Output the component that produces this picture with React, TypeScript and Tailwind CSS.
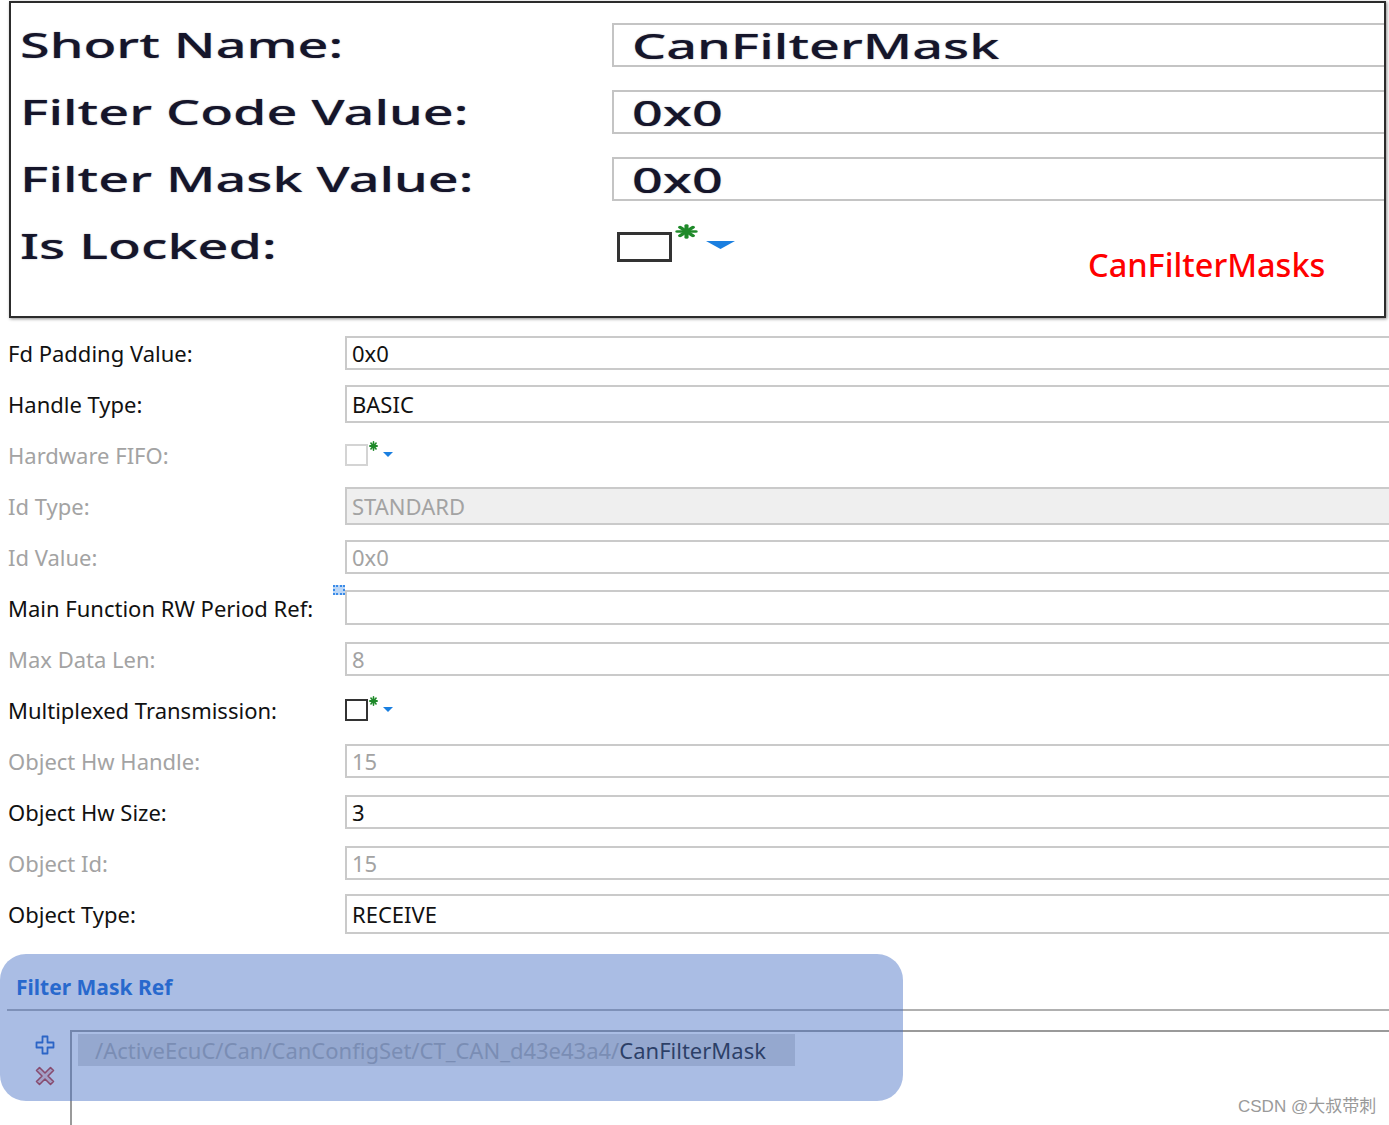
import React from "react";

const Asterisk = ({ className }: { className?: string }) => (
  <svg viewBox="0 0 10 10" className={className} preserveAspectRatio="none">
    <g stroke="#1f8a2a" strokeWidth="1.8" strokeLinecap="round">
      <line x1="5" y1="1" x2="5" y2="9" />
      <line x1="1" y1="5" x2="9" y2="5" />
      <line x1="2.2" y1="2.2" x2="7.8" y2="7.8" />
      <line x1="7.8" y1="2.2" x2="2.2" y2="7.8" />
    </g>
  </svg>
);

const Tri = ({ className }: { className?: string }) => (
  <svg viewBox="0 0 10 6" className={className} preserveAspectRatio="none">
    <polygon points="0,0 10,0 5,6" fill="#1a7fe0" />
  </svg>
);

type Row =
  | { label: string; kind: "input"; value: string; disabled?: boolean; h: number; bg?: string; icon?: boolean }
  | { label: string; kind: "check"; disabled?: boolean };

const rows: Row[] = [
  { label: "Fd Padding Value:", kind: "input", value: "0x0", h: 34 },
  { label: "Handle Type:", kind: "input", value: "BASIC", h: 38 },
  { label: "Hardware FIFO:", kind: "check", disabled: true },
  { label: "Id Type:", kind: "input", value: "STANDARD", disabled: true, h: 38, bg: "gray" },
  { label: "Id Value:", kind: "input", value: "0x0", disabled: true, h: 34 },
  { label: "Main Function RW Period Ref:", kind: "input", value: "", h: 35, icon: true },
  { label: "Max Data Len:", kind: "input", value: "8", disabled: true, h: 34 },
  { label: "Multiplexed Transmission:", kind: "check" },
  { label: "Object Hw Handle:", kind: "input", value: "15", disabled: true, h: 34 },
  { label: "Object Hw Size:", kind: "input", value: "3", h: 34 },
  { label: "Object Id:", kind: "input", value: "15", disabled: true, h: 34 },
  { label: "Object Type:", kind: "input", value: "RECEIVE", h: 40 },
];

const TopRow = ({ label, children }: { label: string; children: React.ReactNode }) => (
  <div className="grid grid-cols-[592px_1fr] h-[44px] items-center">
    <div className="overflow-visible whitespace-nowrap">
      <span className="inline-block origin-left scale-x-[1.54] text-[35px] leading-none font-medium text-[#15152a] [text-shadow:0_0_1px_rgba(0,0,40,0.5)]">
        {label}
      </span>
    </div>
    {children}
  </div>
);

const TopInput = ({ value }: { value: string }) => (
  <div className="h-[44px] border-2 border-r-0 border-[#c4c4c4] bg-white flex items-center pl-[18px] overflow-hidden">
    <span className="inline-block origin-left scale-x-[1.54] text-[35px] leading-none font-medium text-[#15152a] whitespace-nowrap [text-shadow:0_0_1px_rgba(0,0,40,0.5)]">
      {value}
    </span>
  </div>
);

export default function App() {
  return (
    <div
      className="relative w-[1389px] h-[1125px] overflow-hidden bg-white"
      style={{ fontFamily: '"Noto Sans", "Open Sans", sans-serif' }}
    >
      {/* Top zoomed panel */}
      <div className="relative ml-[9px] mt-[1px] w-[1377px] h-[317px] border-2 border-[#2c2c2c] shadow-[1px_1px_3px_rgba(0,0,0,0.45)] bg-white pl-[9px] pt-[20px] flex flex-col gap-[23px]">
        <TopRow label="Short Name:">
          <TopInput value="CanFilterMask" />
        </TopRow>
        <TopRow label="Filter Code Value:">
          <TopInput value="0x0" />
        </TopRow>
        <TopRow label="Filter Mask Value:">
          <TopInput value="0x0" />
        </TopRow>
        <TopRow label="Is Locked:">
          <div className="flex items-start h-[44px] pt-[8px] pl-[5px]">
            <div className="w-[55px] h-[30px] border-[3px] border-[#333] bg-white" />
            <Asterisk className="w-[23px] h-[15px] -mt-[8px] ml-[3px]" />
            <Tri className="w-[29px] h-[8px] mt-[9px] ml-[8px]" />
          </div>
        </TopRow>
        <div className="absolute left-[1077px] top-[246px] text-[32.5px] leading-none font-medium text-[#ff0000] whitespace-nowrap">
          CanFilterMasks
        </div>
      </div>

      {/* Form rows */}
      <div className="mt-[9px] flex flex-col">
        {rows.map((r, i) => (
          <div key={i} className="grid grid-cols-[345px_1fr] h-[51px] items-center">
            <div
              className={`relative pl-[8px] text-[22px] leading-none whitespace-nowrap ${
                r.disabled ? "text-[#a3a3a3]" : "text-[#111]"
              }`}
            >
              {r.label}
              {r.kind === "input" && r.icon && (
                <div className="absolute right-0 -top-[12px] w-[12px] h-[10px] border-2 border-dotted border-[#3a8be8] bg-[#bcd7f7]" />
              )}
            </div>
            {r.kind === "input" ? (
              <div
                className={`-mr-[4px] border-2 border-[#cacaca] flex items-center pl-[5px] text-[22px] leading-none whitespace-nowrap ${
                  r.bg === "gray" ? "bg-[#efefef]" : "bg-white"
                } ${r.disabled ? "text-[#a3a3a3]" : "text-[#111]"}`}
                style={{ height: r.h }}
              >
                {r.value}
              </div>
            ) : (
              <div className="flex items-start h-[30px] pt-[4px]">
                <div
                  className={`w-[23px] h-[22px] border-2 ${
                    r.disabled ? "border-[#d4d4d4]" : "border-[#333]"
                  } bg-white`}
                />
                <Asterisk className="w-[9px] h-[10px] -mt-[3px] ml-[1px]" />
                <Tri className="w-[10px] h-[5px] mt-[8px] ml-[5px]" />
              </div>
            )}
          </div>
        ))}
      </div>

      {/* Filter Mask Ref section */}
      <div className="relative mt-[26px]">
        <div className="h-[44px] flex items-center pl-[16px] ml-0">
          <span className="text-[21px] font-bold leading-none text-[#1167d6]">Filter Mask Ref</span>
        </div>
        <div className="ml-[7px] border-t-2 border-[#b0b0b0]" />
        <div className="flex mt-[19px]">
          <div className="w-[70px] flex flex-col items-start pl-[35px] pt-[5px] gap-[11px]">
            <svg viewBox="0 0 20 20" className="w-[20px] h-[20px]">
              <path
                d="M7.5 1.5h5v6h6v5h-6v6h-5v-6h-6v-5h6z"
                fill="#ffffff"
                stroke="#1a5fc8"
                strokeWidth="1.8"
                strokeLinejoin="round"
              />
            </svg>
            <svg viewBox="0 0 20 20" className="w-[20px] h-[20px]">
              <path
                d="M1.5 4.5L4.5 1.5L10 7L15.5 1.5L18.5 4.5L13 10L18.5 15.5L15.5 18.5L10 13L4.5 18.5L1.5 15.5L7 10Z"
                fill="#f2caca"
                stroke="#c0302a"
                strokeWidth="1.6"
                strokeLinejoin="round"
              />
            </svg>
          </div>
          <div className="flex-1 h-[100px] border-l-2 border-t-2 border-[#9a9a9a] pl-[6px] pt-[2px]">
            <div className="w-[717px] h-[32px] bg-[#d9d9d9] flex items-center pl-[17px] text-[22px] leading-none whitespace-nowrap">
              <span className="text-[#a8a8a8]">/ActiveEcuC/Can/CanConfigSet/CT_CAN_d43e43a4/</span>
              <span className="text-[#1a1a1a]">CanFilterMask</span>
            </div>
          </div>
        </div>
        {/* highlight overlay */}
        <div className="absolute left-0 -top-[11px] w-[903px] h-[147px] rounded-[26px] bg-[rgba(66,108,195,0.45)] pointer-events-none" />
      </div>

      {/* watermark */}
      <div
        className="absolute left-[1238px] top-[1098px] text-[17px] leading-none text-[#9a9a9a] whitespace-nowrap"
        style={{ fontFamily: '"Liberation Sans", "Noto Sans CJK SC", sans-serif' }}
      >
        CSDN @大叔带刺
      </div>
    </div>
  );
}
